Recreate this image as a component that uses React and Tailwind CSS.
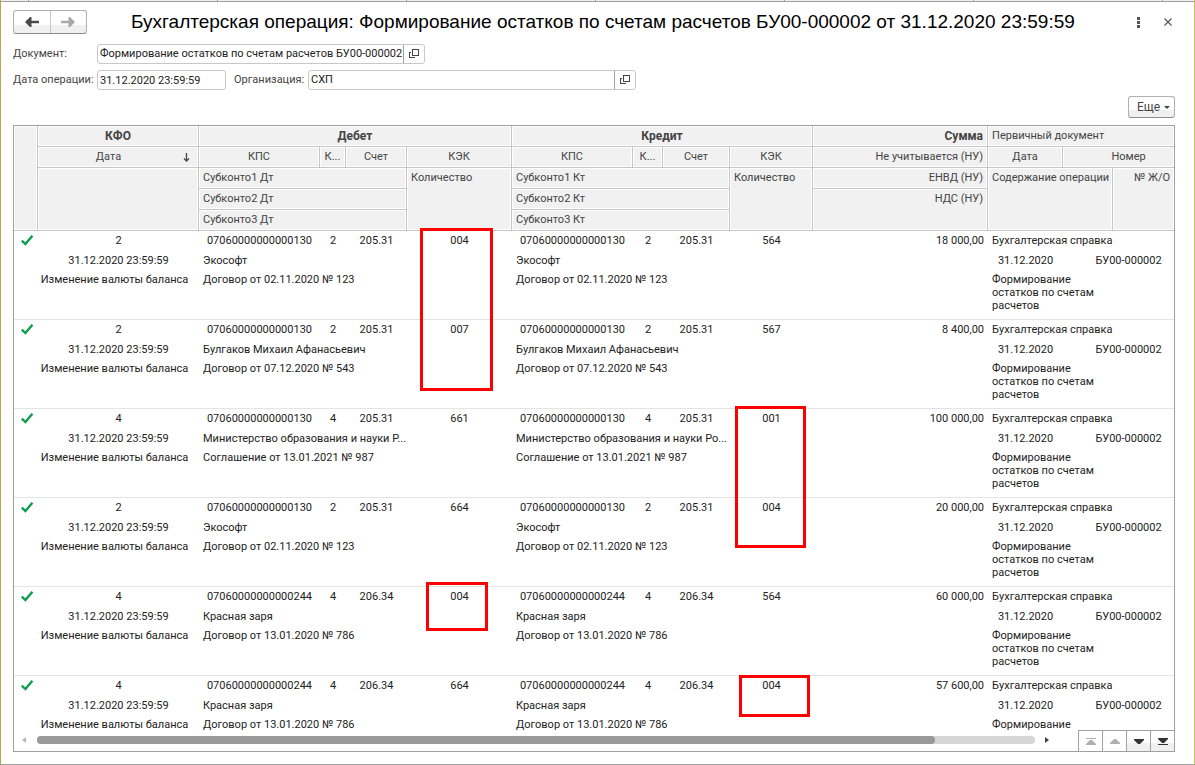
import { useState } from 'react'

const SUB = 'Изменение валюты баланса'
const NOTE = 'Формирование остатков по счетам расчетов'

const entries = [
  { kfo: '2', kps: '07060000000000130', acc: '205.31', dt: '004', kt: '564', sum: '18 000,00', who: 'Экософт', deal: 'Договор от 02.11.2020 № 123', markDt: '-top-[3px] left-[13px] w-[73px] h-[163px]' },
  { kfo: '2', kps: '07060000000000130', acc: '205.31', dt: '007', kt: '567', sum: '8 400,00', who: 'Булгаков Михаил Афанасьевич', deal: 'Договор от 07.12.2020 № 543' },
  { kfo: '4', kps: '07060000000000130', acc: '205.31', dt: '661', kt: '001', sum: '100 000,00', who: 'Министерство образования и науки Р...', whoKt: 'Министерство образования и науки Ро...', deal: 'Соглашение от 13.01.2021 № 987', markKt: '-top-[3px] left-[5px] w-[71px] h-[142px]' },
  { kfo: '2', kps: '07060000000000130', acc: '205.31', dt: '664', kt: '004', sum: '20 000,00', who: 'Экософт', deal: 'Договор от 02.11.2020 № 123' },
  { kfo: '4', kps: '07060000000000244', acc: '206.34', dt: '004', kt: '564', sum: '60 000,00', who: 'Красная заря', deal: 'Договор от 13.01.2020 № 786', markDt: '-top-[5px] left-[19px] w-[62px] h-[49px]' },
  { kfo: '4', kps: '07060000000000244', acc: '206.34', dt: '664', kt: '004', sum: '57 600,00', who: 'Красная заря', deal: 'Договор от 13.01.2020 № 786', markKt: '-top-px left-[9px] w-[71px] h-[42px]' },
]

function Th({ className = '', bold, children, ...rest }) {
  return (
    <th
      className={`h-[21px] border-r border-b border-[#c6c6c6] bg-[#f1f1f1] px-1 leading-5 shadow-[inset_0_0_0_1px_#fff] align-top whitespace-nowrap ${bold ? 'text-xs font-bold' : 'font-normal'} ${className}`}
      {...rest}
    >
      {children}
    </th>
  )
}

function OpenIcon() {
  return (
    <svg width="10" height="10" viewBox="0 0 10 10" fill="none" stroke="#444" shapeRendering="crispEdges" aria-hidden="true">
      <path d="M3.5 .5h6v6h-6zM2 3.5H.5v5h5V8" />
    </svg>
  )
}

function Check() {
  return (
    <svg className="mx-auto mt-1" width="14" height="11" viewBox="0 0 14 11" fill="none" stroke="#0f9d50" strokeWidth="2.4" aria-label="Проведено">
      <path d="M1.8 5.6 5.4 9 12.4.8" />
    </svg>
  )
}

function Entry({ e }) {
  return (
    <tbody className="text-[#222]">
      <tr className="h-5 align-top leading-5">
        <td rowSpan={3} className="border-b border-[#e4e4e4] pl-[2px]"><Check /></td>
        <td className="text-center">{e.kfo}</td>
        <td className="text-center">{e.kps}</td>
        <td className="text-center">{e.kfo}</td>
        <td className="text-center">{e.acc}</td>
        <td className="relative text-center">
          {e.dt}
          {e.markDt && <span className={`absolute z-10 border-3 border-[#fe0000] ${e.markDt}`} />}
        </td>
        <td className="text-center">{e.kps}</td>
        <td className="text-center">{e.kfo}</td>
        <td className="text-center">{e.acc}</td>
        <td className="relative text-center">
          {e.kt}
          {e.markKt && <span className={`absolute z-10 border-3 border-[#fe0000] ${e.markKt}`} />}
        </td>
        <td className="pr-1 text-right">{e.sum}</td>
        <td colSpan={3} className="px-1">Бухгалтерская справка</td>
      </tr>
      <tr className="h-[19px] align-top leading-[19px]">
        <td className="text-center">31.12.2020 23:59:59</td>
        <td colSpan={3} className="pl-1 whitespace-nowrap">{e.who}</td>
        <td />
        <td colSpan={3} className="pl-1 whitespace-nowrap">{e.whoKt ?? e.who}</td>
        <td />
        <td />
        <td className="text-center">31.12.2020</td>
        <td colSpan={2} className="pl-5 text-center">БУ00-000002</td>
      </tr>
      <tr className="h-[50px] align-top leading-[13px] [&>td]:border-b [&>td]:border-[#e4e4e4] [&>td]:pt-[3px]">
        <td className="pr-2 text-center whitespace-nowrap">{SUB}</td>
        <td colSpan={3} className="px-1">{e.deal}</td>
        <td />
        <td colSpan={3} className="px-1">{e.deal}</td>
        <td />
        <td />
        <td colSpan={2} className="px-1">{NOTE}</td>
        <td />
      </tr>
    </tbody>
  )
}

const navButtons = [
  { label: 'В начало', d: 'M0 0h10v1H0zM4 2h2l4 4v1H0V6z', off: true },
  { label: 'Вверх', d: 'M4 1h2l4 4v1H0V5z', off: true },
  { label: 'Вниз', d: 'M0 1h10v1L6 6H4L0 2z' },
  { label: 'В конец', d: 'M0 0h10v1L6 5H4L0 1zM0 6h10v1H0z' },
]

export default function App() {
  const [date, setDate] = useState('31.12.2020 23:59:59')
  const [org, setOrg] = useState('СХП')
  const [doc, setDoc] = useState('Формирование остатков по счетам расчетов БУ00-000002')

  return (
    <div className="flex h-screen flex-col border-r border-b border-l border-b-[#a0a0a0] border-l-[#b9a650] border-r-[#c8bf62] bg-white font-[Roboto,'Liberation_Sans',sans-serif] text-[11px] text-[#444]">
      {/* lower edge of the tab strip */}
      <div className="flex h-[2px] shrink-0 overflow-hidden border-b border-[#a0a0a0] bg-[#f0f0f0]">
        <span className="w-7 shrink-0 border-r border-[#a0a0a0]" />
        {[1, 2, 3, 4, 5, 6].map((n) => (
          <span key={n} className="w-[189px] shrink-0 border-r border-[#a0a0a0]" />
        ))}
      </div>

      <header className="flex items-center pt-2 pr-[18px] pl-3">
        <div className="flex h-6 w-[74px] shrink-0 overflow-hidden rounded-[3px] border border-[#b0b0b0] border-b-[#8c8c8c] bg-linear-to-b from-white from-65% to-[#f0f0f0] to-65%">
          <button aria-label="Назад" className="flex flex-1 items-center justify-center border-r border-[#c6c6c6]">
            <svg width="14" height="10" viewBox="0 0 14 10" fill="#4a4a4a"><path d="M0 5 5 0h1.500v3.700H14v2.600H6.500V10H5z" /></svg>
          </button>
          <button aria-label="Вперед" className="flex flex-1 items-center justify-center">
            <svg width="14" height="10" viewBox="0 0 14 10" fill="#a8a8a8"><path d="M14 5 9 0H7.500v3.700H0v2.600h7.500V10H9z" /></svg>
          </button>
        </div>
        <h1 className="ml-11 flex-1 truncate font-['Liberation_Sans',Arial,sans-serif] text-[19px] leading-6 text-black">
          Бухгалтерская операция: Формирование остатков по счетам расчетов БУ00-000002 от 31.12.2020 23:59:59
        </h1>
        <button aria-label="Меню" className="mr-4 flex w-3 justify-center">
          <svg width="3" height="11" viewBox="0 0 3 11" fill="#555"><path d="M0 0h3v3H0zM0 4h3v3H0zM0 8h3v3H0z" /></svg>
        </button>
        <button aria-label="Закрыть" className="flex w-4 justify-center">
          <svg width="8" height="8" viewBox="0 0 8 8" stroke="#555" strokeWidth="1.2"><path d="M.5.5l7 7M7.500.5l-7 7" /></svg>
        </button>
      </header>

      <div className="mt-[10px] flex items-center px-3">
        <label htmlFor="doc" className="w-[84px]">Документ:</label>
        <div className="flex h-5 w-[328px] rounded-[3px] border border-[#c8c8c8]">
          <input id="doc" value={doc} onChange={(e) => setDoc(e.target.value)} className="min-w-0 flex-1 pl-[2px] text-[#222] outline-none" />
          <button aria-label="Открыть документ" className="flex w-[21px] items-center justify-center border-l border-[#a0a0a0]"><OpenIcon /></button>
        </div>
      </div>
      <div className="mt-[6px] flex items-center px-3">
        <label htmlFor="date" className="w-[84px] whitespace-nowrap">Дата операции:</label>
        <input id="date" value={date} onChange={(e) => setDate(e.target.value)} className="h-5 w-[129px] rounded-[3px] border border-[#c8c8c8] px-[2px] text-[#222] outline-none" />
        <label htmlFor="org" className="ml-2 w-[74px]">Организация:</label>
        <div className="flex h-5 w-[328px] rounded-[3px] border border-[#c8c8c8]">
          <input id="org" value={org} onChange={(e) => setOrg(e.target.value)} className="min-w-0 flex-1 px-[2px] text-[#222] outline-none" />
          <button aria-label="Открыть организацию" className="flex w-[21px] items-center justify-center border-l border-[#a0a0a0]"><OpenIcon /></button>
        </div>
      </div>

      <div className="mt-[6px] flex justify-end pr-[19px]">
        <button className="flex h-[22px] w-[47px] items-center justify-center gap-1 rounded-[3px] border border-[#b0b0b0] border-b-[#8c8c8c] bg-linear-to-b from-white from-65% to-[#f0f0f0] to-65% pl-1 text-xs">
          Еще
          <svg width="6" height="3" viewBox="0 0 6 3" fill="#444"><path d="M0 0h6L3 3z" /></svg>
        </button>
      </div>

      <div className="mt-[7px] mr-[19px] mb-3 ml-3 flex min-h-0 flex-1 flex-col border border-[#a0a0a0]">
        <div className="min-h-0 flex-1 overflow-hidden">
          <table className="w-full table-fixed border-separate border-spacing-0">
            <colgroup>
              <col className="w-[24px]" />
              <col className="w-[161px]" />
              <col className="w-[121px]" />
              <col className="w-[26px]" />
              <col className="w-[61px]" />
              <col className="w-[105px]" />
              <col className="w-[121px]" />
              <col className="w-[30px]" />
              <col className="w-[67px]" />
              <col className="w-[83px]" />
              <col className="w-[175px]" />
              <col className="w-[75px]" />
              <col className="w-[50px]" />
              <col className="w-[61px]" />
            </colgroup>
            <thead>
              <tr>
                <Th rowSpan={5} />
                <Th bold>КФО</Th>
                <Th bold colSpan={4}>Дебет</Th>
                <Th bold colSpan={4}>Кредит</Th>
                <Th bold className="text-right">Сумма</Th>
                <Th colSpan={3} className="border-r-0 text-left">Первичный документ</Th>
              </tr>
              <tr>
                <Th>
                  <span className="flex items-center">
                    <span className="flex-1 pr-2">Дата</span>
                    <svg className="mr-1" width="7" height="9" viewBox="0 0 7 9" fill="none" stroke="#444" strokeWidth="1.3"><path d="M3.500 0v8M1 5.500 3.500 8 6 5.500" /></svg>
                  </span>
                </Th>
                <Th>КПС</Th>
                <Th>К...</Th>
                <Th>Счет</Th>
                <Th>КЭК</Th>
                <Th>КПС</Th>
                <Th>К...</Th>
                <Th>Счет</Th>
                <Th>КЭК</Th>
                <Th className="text-right">Не учитывается (НУ)</Th>
                <Th>Дата</Th>
                <Th colSpan={2} className="border-r-0 pl-6">Номер</Th>
              </tr>
              <tr>
                <Th rowSpan={3} />
                <Th colSpan={3} className="text-left">Субконто1 Дт</Th>
                <Th rowSpan={3} className="text-left">Количество</Th>
                <Th colSpan={3} className="text-left">Субконто1 Кт</Th>
                <Th rowSpan={3} className="text-left">Количество</Th>
                <Th className="text-right">ЕНВД (НУ)</Th>
                <Th rowSpan={3} colSpan={2} className="text-left">Содержание операции</Th>
                <Th rowSpan={3} className="border-r-0 text-right">№ Ж/О</Th>
              </tr>
              <tr>
                <Th colSpan={3} className="text-left">Субконто2 Дт</Th>
                <Th colSpan={3} className="text-left">Субконто2 Кт</Th>
                <Th rowSpan={2} className="text-right">НДС (НУ)</Th>
              </tr>
              <tr>
                <Th colSpan={3} className="text-left">Субконто3 Дт</Th>
                <Th colSpan={3} className="text-left">Субконто3 Кт</Th>
              </tr>
            </thead>
            {entries.map((e, i) => <Entry key={i} e={e} />)}
          </table>
        </div>

        <div className="flex h-[21px] shrink-0 items-stretch">
          <div className="flex flex-1 items-center pr-7 pb-[2px] pl-2">
            <svg width="5" height="6" viewBox="0 0 5 6" fill="#b8b8b8"><path d="M4 0v6L0 3z" /></svg>
            <div className="mx-[10px] h-2 flex-1 rounded-full bg-[#d6d6d6]">
              <div className="h-2 w-[90%] rounded-full bg-[#999]" />
            </div>
            <svg width="5" height="6" viewBox="0 0 5 6" fill="#444"><path d="M0 0v6l4-3z" /></svg>
          </div>
          {navButtons.map((b) => (
            <button key={b.label} aria-label={b.label} disabled={b.off} className="flex w-6 items-center justify-center border-t border-l border-[#a0a0a0] bg-linear-to-b from-white from-60% to-[#f0f0f0] to-60% disabled:bg-none">
              <svg width="10" height="7" viewBox="0 0 10 7" fill={b.off ? '#b0b0b0' : '#333'}><path d={b.d} /></svg>
            </button>
          ))}
        </div>
      </div>
    </div>
  )
}
